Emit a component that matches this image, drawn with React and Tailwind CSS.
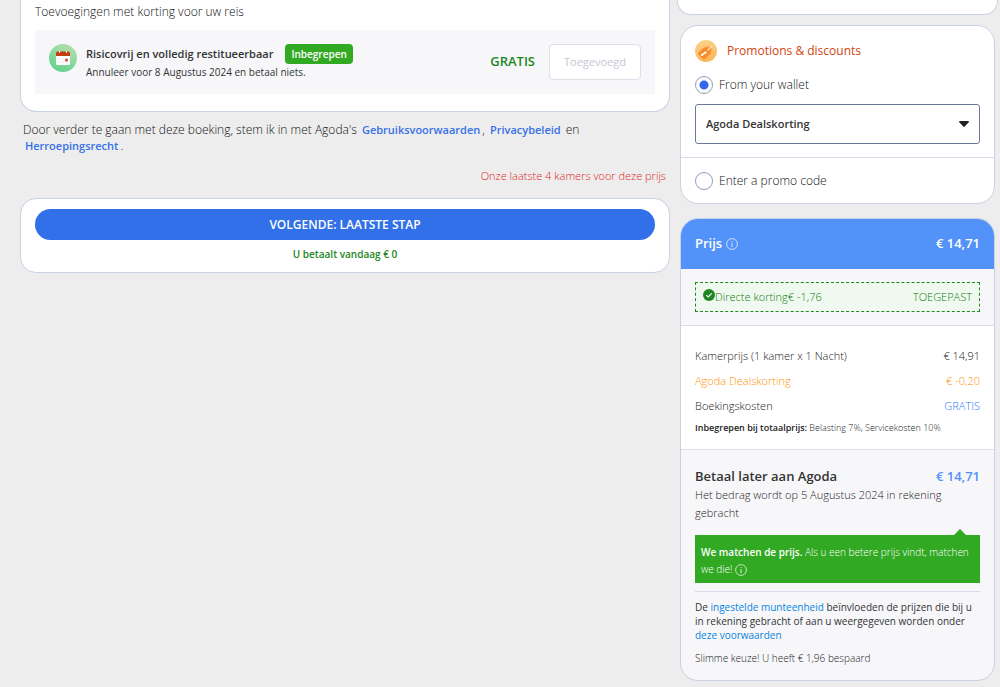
import { useState } from 'react';

const InfoIcon = ({ className }) => (
  <svg viewBox="0 0 12 12" className={className} fill="none" stroke="currentColor" aria-hidden="true">
    <circle cx="6" cy="6" r="5.4" strokeWidth="0.7" />
    <path d="M6 5v4" strokeWidth="0.8" />
    <circle cx="6" cy="3.4" r="0.5" fill="currentColor" stroke="none" />
  </svg>
);

const CalendarBadge = () => (
  <svg viewBox="0 0 28 28" className="w-7 h-7 shrink-0" aria-hidden="true">
    <defs>
      <linearGradient id="calendarBg" x1="0.8" y1="0" x2="0.3" y2="1">
        <stop offset="0" stopColor="#b9dfae" />
        <stop offset="1" stopColor="#5fd28f" />
      </linearGradient>
    </defs>
    <circle cx="14" cy="14" r="14" fill="url(#calendarBg)" />
    <rect x="7" y="8" width="14" height="13" rx="1.5" fill="#fff" />
    <path d="M8.5 7.5h11A1.5 1.5 0 0 1 21 9v3H7V9a1.5 1.5 0 0 1 1.5-1.5z" fill="#c23f10" />
    <path d="M10.5 6.8v2M17.5 6.8v2" stroke="#fff" strokeWidth="1" />
    <path d="M7.5 15h13M7.5 18h13M10.3 12.5v8M14 12.5v8M17.7 12.5v8" stroke="#e3e6ea" strokeWidth="0.5" />
    <rect x="16.2" y="14.8" width="2.6" height="2.6" fill="#d8481c" />
  </svg>
);

const PromoBadge = () => (
  <svg viewBox="0 0 22 22" className="w-[22px] h-[22px] shrink-0" aria-hidden="true">
    <defs>
      <linearGradient id="promoBg" x1="0" y1="0" x2="0.3" y2="1">
        <stop offset="0" stopColor="#fbd490" />
        <stop offset="1" stopColor="#fcb75a" />
      </linearGradient>
    </defs>
    <circle cx="11" cy="11" r="11" fill="url(#promoBg)" />
    <path d="M3.5 12.5l5.5-5 6-1 1.5 2-.5 4.5-6 6a1.5 1.5 0 0 1-2 0l-4.5-4.5a1.4 1.4 0 0 1 0-2z" fill="#fb8a2c" />
    <path d="M13 10l4-4" stroke="#ffe6bd" strokeWidth="1.2" strokeLinecap="round" />
    <path d="M7 15l3.4-2.6" stroke="#fff" strokeWidth="1.6" />
    <circle cx="7" cy="15" r="1.1" fill="#fff" />
    <circle cx="10.6" cy="12.6" r="1.1" fill="#fff" />
  </svg>
);

const CheckBadge = () => (
  <svg viewBox="0 0 12 12" className="w-3 h-3 shrink-0 mb-1" aria-hidden="true">
    <circle cx="6" cy="6" r="6" fill="#218721" />
    <path d="M3.3 6.1l1.9 1.8 3.5-3.6" fill="none" stroke="#fff" strokeWidth="1.1" />
  </svg>
);

const radioClass =
  'appearance-none w-[18px] h-[18px] shrink-0 rounded-full border border-[#8f9bb8] bg-white checked:bg-[radial-gradient(circle,#3367e8_4px,#fff_5px)]';

const priceRows = [
  { label: 'Kamerprijs (1 kamer x 1 Nacht)', amount: '€ 14,91', color: 'text-[#222]', amountColor: 'text-[#222]' },
  { label: 'Agoda Dealskorting', amount: '€ -0,20', color: 'text-[#ff9000]', amountColor: 'text-[#ff9000]' },
  { label: 'Boekingskosten', amount: 'GRATIS', color: 'text-[#222]', amountColor: 'text-[#2f78f8]' },
];

const Booking = () => (
  <main className="flex-1 min-w-0 pl-5 pr-[6px]">
    <section className="bg-white border border-t-0 border-[#c8d1e6] rounded-b-2xl px-[14px] pt-[2px] pb-[17px]">
      <h2 className="text-xs leading-5 font-light text-[#111] mb-2">Toevoegingen met korting voor uw reis</h2>
      <div className="flex items-center bg-[#f7f7fa] h-16 px-[14px]">
        <div className="flex flex-1 items-start gap-[9px] self-start pt-[14px]">
          <CalendarBadge />
          <div>
            <div className="flex items-center gap-3 h-5">
              <h3 className="text-[11px] font-semibold">Risicovrij en volledig restitueerbaar</h3>
              <span className="bg-[#32a923] text-white text-[10px] leading-5 font-semibold rounded px-[6px]">Inbegrepen</span>
            </div>
            <p className="text-[10px] leading-4">Annuleer voor 8 Augustus 2024 en betaal niets.</p>
          </div>
        </div>
        <span className="text-[13px] font-semibold text-[#218721] mr-[14px]">GRATIS</span>
        <button type="button" disabled className="h-9 px-[14px] bg-white border border-[#dddfe9] rounded text-[11px] text-[#c5c8d2]">
          Toegevoegd
        </button>
      </div>
    </section>

    <p className="mt-[10px] pl-[3px] pr-10 text-xs leading-4 font-light text-[#111]">
      Door verder te gaan met deze boeking, stem ik in met Agoda's{' '}
      <a href="#voorwaarden" className="px-[2px] text-[11px] font-semibold text-[#3770e8]">Gebruiksvoorwaarden</a>,{' '}
      <a href="#privacy" className="px-[2px] text-[11px] font-semibold text-[#3770e8]">Privacybeleid</a> en{' '}
      <br />
      <a href="#herroeping" className="px-[2px] text-[11px] font-semibold text-[#3770e8]">Herroepingsrecht</a>.
    </p>

    <p className="mt-[14px] pr-1 text-right text-[11px] leading-4 font-light text-[#e11d1d]">Onze laatste 4 kamers voor deze prijs</p>

    <section className="mt-[14px] bg-white border border-[#c8d1e6] rounded-2xl px-[14px] pt-[10px] pb-[9px] text-center">
      <button type="button" className="block w-full h-[31px] rounded-full bg-[#3170e8] text-white text-xs font-semibold">
        VOLGENDE: LAATSTE STAP
      </button>
      <p className="mt-[5px] text-[10px] leading-[18px] font-semibold text-[#218721]">U betaalt vandaag € 0</p>
    </section>
  </main>
);

const Promotions = () => {
  const [source, setSource] = useState('wallet');

  return (
    <section className="mt-[10px] bg-white border border-[#c8d1e6] rounded-[18px]">
      <div className="px-[14px] pt-[14px] pb-[13px] border-b border-[#d9dce8]">
        <div className="flex items-center gap-[10px] mb-[14px]">
          <PromoBadge />
          <h2 className="text-xs text-[#cf4510]">Promotions &amp; discounts</h2>
        </div>
        <label className="flex items-center gap-[6px] text-xs font-light text-[#111] h-[18px] mb-[10px]">
          <input type="radio" name="promo" checked={source === 'wallet'} onChange={() => setSource('wallet')} className={radioClass} />
          From your wallet
        </label>
        <div className="grid items-center">
          <select
            aria-label="Wallet"
            className="col-start-1 row-start-1 appearance-none w-full h-10 rounded-[3px] border border-[#6b7794] bg-white px-[10px] text-[11px] font-semibold"
          >
            <option>Agoda Dealskorting</option>
          </select>
          <svg viewBox="0 0 10 6" className="col-start-1 row-start-1 justify-self-end mr-[11px] w-[10px] h-[6px] pointer-events-none" aria-hidden="true">
            <path d="M0 1q0-1 1-1h8q1 0 1 1L5.7 5.6q-.7.7-1.4 0z" fill="#222" />
          </svg>
        </div>
      </div>
      <label className="flex items-center gap-[6px] text-xs font-light text-[#111] px-[14px] h-[45px]">
        <input type="radio" name="promo" checked={source === 'code'} onChange={() => setSource('code')} className={radioClass} />
        Enter a promo code
      </label>
    </section>
  );
};

const PriceCard = () => (
  <section className="mt-[14px] bg-[#f7f7fa] border border-[#c8d1e6] rounded-[18px] overflow-hidden">
    <div className="flex items-center justify-between h-[50px] px-[14px] bg-[#5392f9] text-white">
      <h2 className="flex items-center gap-1 text-[13px] font-semibold">
        Prijs <InfoIcon className="w-3 h-3" />
      </h2>
      <span className="text-[13px] font-semibold">€ 14,71</span>
    </div>

    <div className="px-[14px] py-[13px] border-b border-[#dddfe6]">
      <div className="flex items-center h-[30px] px-[7px] border border-dashed border-[#218721] bg-[#f0f9f0] text-[11px] font-light text-[#0f7a0f]">
        <CheckBadge />
        <span>Directe korting</span>
        <span>€ -1,76</span>
        <span className="ml-auto">TOEGEPAST</span>
      </div>
    </div>

    <div className="bg-white px-[14px] pt-[17px] pb-[11px] border-b border-[#dddfe6]">
      {priceRows.map((row) => (
        <div key={row.label} className="flex justify-between text-[11px] leading-[25px] font-light">
          <span className={row.color}>{row.label}</span>
          <span className={row.amountColor}>{row.amount}</span>
        </div>
      ))}
      <p className="text-[9px] leading-5 font-light text-[#222]">
        <b className="font-semibold">Inbegrepen bij totaalprijs:</b> Belasting 7%, Servicekosten 10%
      </p>
    </div>

    <div className="px-[14px] pt-4 pb-[14px]">
      <div className="flex items-center justify-between leading-5 font-semibold">
        <h3 className="text-[13px]">Betaal later aan Agoda</h3>
        <span className="text-[13px] text-[#5392f9]">€ 14,71</span>
      </div>
      <p className="text-[11px] leading-[18px] font-light text-[#222]">Het bedrag wordt op 5 Augustus 2024 in rekening gebracht</p>

      <svg viewBox="0 0 12 6" className="block ml-auto mr-[14px] mt-[7px] w-3 h-[6px]" aria-hidden="true">
        <path d="M0 6l6-6 6 6z" fill="#32a923" />
      </svg>
      <div className="bg-[#32a923] text-white text-[10px] leading-[17px] font-light pl-[6px] pr-1 pt-[9px] pb-[5px]">
        <b className="font-semibold">We matchen de prijs.</b> Als u een betere prijs vindt, matchen we die!{' '}
        <InfoIcon className="inline w-3 h-3" />
      </div>

      <p className="mt-2 pt-2 border-t border-[#d3dbea] text-[10px] leading-[14px]">
        De <a href="#munteenheid" className="text-[#0a84e0]">ingestelde munteenheid</a> beïnvloeden de prijzen die bij u in rekening gebracht of aan u weergegeven worden onder{' '}
        <a href="#prijsvoorwaarden" className="text-[#0a84e0]">deze voorwaarden</a>
      </p>
      <p className="mt-2 text-[10px] leading-4 font-light text-[#222]">Slimme keuze! U heeft € 1,96 bespaard</p>
    </div>
  </section>
);

const App = () => {
  return (
    <div className="min-h-screen flex items-start bg-[#ededed] text-[#333] font-['Open_Sans','Noto_Sans',sans-serif]">
      <Booking />
      <aside className="w-[324px] shrink-0 pl-[1px] pr-[2px]">
        <div className="h-[15px] bg-white border border-t-0 border-[#c8d1e6] rounded-b-[14px]" />
        <div className="pl-[3px] pr-[3px]">
          <Promotions />
          <PriceCard />
        </div>
      </aside>
    </div>
  );
};

export default App;
